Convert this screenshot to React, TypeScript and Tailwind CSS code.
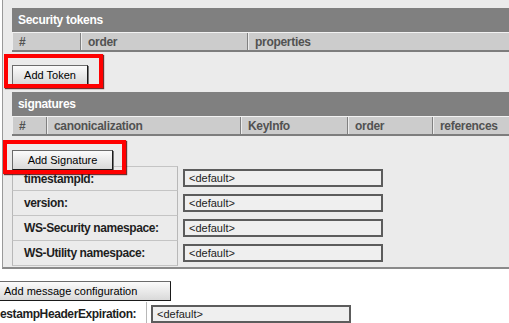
import React from "react"

const font = { fontFamily: '"Liberation Sans", Arial, sans-serif' }

function HeaderBar({ title }: { title: string }) {
  return (
    <div className="h-[24px] bg-[#808080] flex items-center pl-[6px] text-[12px] font-bold tracking-[-0.3px] text-white">
      {title}
    </div>
  )
}

function ColumnRow({ cols }: { cols: { label: string; w: string }[] }) {
  return (
    <div className="h-[20px] flex bg-[#cccccc] border-t border-t-[#f2f2f2] border-b-2 border-b-[#7d7d7d]">
      {cols.map((c, i) => (
        <div
          key={i}
          className={`${c.w} shrink-0 flex items-center pl-[6px] text-[12px] font-bold tracking-[-0.3px] text-[#525252] border-l border-l-[#ececec] border-r border-r-[#808080]`}
        >
          {c.label}
        </div>
      ))}
    </div>
  )
}

function Btn({ label, className }: { label: string; className: string }) {
  return (
    <button
      className={`h-[20px] text-[11px] text-black bg-gradient-to-b from-[#fbfbfb] to-[#d9d9d9] border border-[#6b6b6b] border-r-[#1a1a1a] border-b-[#1a1a1a] shadow-[1px_1px_0_#777] ${className}`}
    >
      {label}
    </button>
  )
}

function Input() {
  return (
    <div className="w-[200px] h-[18px] border-2 border-[#5c5c5c] bg-[#efefef] flex items-center pl-[4px] text-[11px] text-[#222]">
      &lt;default&gt;
    </div>
  )
}

function FieldRow({ label, first }: { label: string; first?: boolean }) {
  return (
    <div className="flex h-[25px]">
      <div
        className={`w-[166px] shrink-0 flex items-center pl-[11px] text-[12px] font-bold tracking-[-0.4px] text-[#1e1e1e] border-l border-l-[#b8b8b8] border-r border-r-[#b8b8b8] border-b border-b-[#c4c4c4] ${first ? "border-t border-t-[#c4c4c4]" : ""}`}
      >
        {label}
      </div>
      <div className="pl-[5px] pt-[3px]">
        <Input />
      </div>
    </div>
  )
}

export default function App() {
  return (
    <div className="w-[509px] h-[323px] overflow-hidden bg-white" style={font}>
      {/* settings panel */}
      <div className="ml-[2px] h-[269px] border-l border-l-[#9a9a9a] border-b-2 border-b-[#8a8a8a] bg-[#ebebeb] pt-[8px] pl-[9px]">
        <HeaderBar title="Security tokens" />
        <ColumnRow
          cols={[
            { label: "#", w: "w-[69px]" },
            { label: "order", w: "w-[167px]" },
            { label: "properties", w: "w-[300px]" },
          ]}
        />
        <div className="h-[40px] pt-[10px]">
          <div className="relative w-fit">
            <Btn label="Add Token" className="w-[76px]" />
            <div className="absolute left-[-8px] top-[-8px] w-[99px] h-[34px] border-[4px] border-[#ff0000] shadow-[1px_1px_1px_rgba(80,0,0,0.8)]" />
          </div>
        </div>
        <HeaderBar title="signatures" />
        <ColumnRow
          cols={[
            { label: "#", w: "w-[35px]" },
            { label: "canonicalization", w: "w-[194px]" },
            { label: "KeyInfo", w: "w-[107px]" },
            { label: "order", w: "w-[85px]" },
            { label: "references", w: "w-[120px]" },
          ]}
        />
        <div className="h-[30px] pt-[11px]">
          <div className="relative w-fit">
            <Btn label="Add Signature" className="w-[101px]" />
            <div className="absolute left-[-9px] top-[-7px] w-[123px] h-[34px] border-[4px] border-[#ff0000] shadow-[1px_1px_1px_rgba(80,0,0,0.8)]" />
          </div>
        </div>
        <FieldRow label="timestampId:" first />
        <FieldRow label="version:" />
        <FieldRow label="WS-Security namespace:" />
        <FieldRow label="WS-Utility namespace:" />
      </div>

      {/* message configuration */}
      <div className="pt-[9px]">
        <button className="w-[171px] h-[20px] text-left pl-[4px] text-[11px] text-black bg-gradient-to-b from-[#fbfbfb] to-[#d9d9d9] border border-[#6b6b6b] border-l-0 border-r-[#1a1a1a] border-b-[#1a1a1a]">
          Add message configuration
        </button>
        <div className="flex h-[24px]">
          <div className="w-[147px] shrink-0 flex items-center text-[12px] font-bold tracking-[-0.4px] text-[#1e1e1e] border-r border-r-[#b8b8b8] whitespace-nowrap overflow-hidden">
            estampHeaderExpiration:
          </div>
          <div className="pl-[4px] pt-[3px]">
            <Input />
          </div>
        </div>
      </div>
    </div>
  )
}
